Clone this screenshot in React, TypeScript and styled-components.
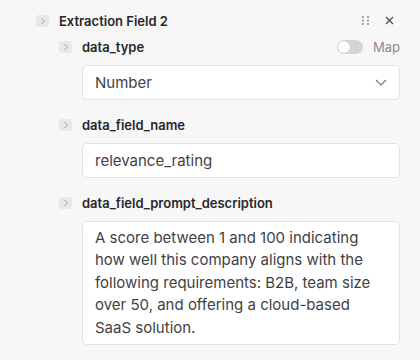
import React from 'react';
import styled, { createGlobalStyle } from 'styled-components';

const Global = createGlobalStyle`
	html, body {
		margin: 0;
		padding: 0;
		background: #f7f7f7;
	}
	body {
		font-family: Inter, "Noto Sans", sans-serif;
		color: #27272a;
	}
`;

const Panel = styled.div`
	width: 420px;
	height: 360px;
	box-sizing: border-box;
	padding: 11px 20px 0 36px;
	display: flex;
	flex-direction: column;
`;

const HeaderRow = styled.div`
	display: flex;
	align-items: center;
	height: 20px;
	gap: 10px;
`;

const Title = styled.div`
	flex: 1;
	font-size: 13px;
	font-weight: 600;
	color: #27272a;
`;

const Toggle = styled.div`
	width: 13px;
	height: 12px;
	border-radius: 3px;
	background: #e6e8ec;
	display: flex;
	align-items: center;
	justify-content: center;
	flex-shrink: 0;
`;

const Actions = styled.div`
	display: flex;
	align-items: center;
	gap: 16px;
	padding-right: 6px;
`;

const Fields = styled.div`
	display: flex;
	flex-direction: column;
	padding-left: 23px;
	margin-top: 6px;
`;

const Field = styled.div`
	display: flex;
	flex-direction: column;
	margin-bottom: 15px;
`;

const LabelRow = styled.div`
	display: flex;
	align-items: center;
	gap: 10px;
	height: 20px;
	margin-bottom: 8px;
`;

const Label = styled.div`
	flex: 1;
	font-size: 13px;
	font-weight: 600;
	color: #27272a;
`;

const Box = styled.div`
	margin-left: 23px;
	box-sizing: border-box;
	background: #ffffff;
	border: 1px solid #e2e2e4;
	border-radius: 5px;
	padding: 0 12px;
	font-size: 15px;
	color: #3f3f46;
`;

const Input = styled(Box)`
	height: 35px;
	display: flex;
	align-items: center;
	justify-content: space-between;
`;

const TextArea = styled(Box)`
	padding-top: 5px;
	padding-bottom: 5px;
	line-height: 22.4px;
`;

const MapSwitch = styled.div`
	display: flex;
	align-items: center;
	gap: 10px;
	font-size: 13px;
	color: #8a8a90;
`;

const Track = styled.div`
	width: 26px;
	height: 14px;
	border-radius: 7px;
	background: #d1d5db;
	display: flex;
	align-items: center;
	padding: 1px;
	box-sizing: border-box;
`;

const Knob = styled.div`
	width: 12px;
	height: 12px;
	border-radius: 50%;
	background: #fff;
	box-shadow: 0 0 1px rgba(0, 0, 0, 0.2);
`;

const Chevron = () => (
	<svg width="6" height="8" viewBox="0 0 6 8" fill="none">
		<path d="M1.5 1 L4.5 4 L1.5 7" stroke="#a1a1aa" strokeWidth="1" />
	</svg>
);

const Expander = () => (
	<Toggle>
		<Chevron />
	</Toggle>
);

const DragHandle = () => (
	<svg width="7" height="9" viewBox="0 0 7 9" fill="#8a8a90">
		<circle cx="1" cy="1" r="1" />
		<circle cx="6" cy="1" r="1" />
		<circle cx="1" cy="4.5" r="1" />
		<circle cx="6" cy="4.5" r="1" />
		<circle cx="1" cy="8" r="1" />
		<circle cx="6" cy="8" r="1" />
	</svg>
);

const Close = () => (
	<svg width="9" height="9" viewBox="0 0 9 9" fill="none">
		<path d="M1 1 L8 8 M8 1 L1 8" stroke="#52525b" strokeWidth="1.4" />
	</svg>
);

const ChevronDown = () => (
	<svg width="12" height="7" viewBox="0 0 12 7" fill="none">
		<path d="M1 1 L6 6 L11 1" stroke="#6b7280" strokeWidth="1.1" />
	</svg>
);

const App: React.FC = () => {
	return (
		<>
			<Global />
			<Panel>
				<HeaderRow>
					<Expander />
					<Title>Extraction Field 2</Title>
					<Actions>
						<DragHandle />
						<Close />
					</Actions>
				</HeaderRow>
				<Fields>
					<Field>
						<LabelRow>
							<Expander />
							<Label>data_type</Label>
							<MapSwitch>
								<Track><Knob /></Track>
								Map
							</MapSwitch>
						</LabelRow>
						<Input>
							Number
							<ChevronDown />
						</Input>
					</Field>
					<Field>
						<LabelRow>
							<Expander />
							<Label>data_field_name</Label>
						</LabelRow>
						<Input>relevance_rating</Input>
					</Field>
					<Field>
						<LabelRow>
							<Expander />
							<Label>data_field_prompt_description</Label>
						</LabelRow>
						<TextArea>
							A score between 1 and 100 indicating how well this company aligns with the following requirements: B2B, team size over 50, and offering a cloud-based SaaS solution.
						</TextArea>
					</Field>
				</Fields>
			</Panel>
		</>
	);
};

export default App;
